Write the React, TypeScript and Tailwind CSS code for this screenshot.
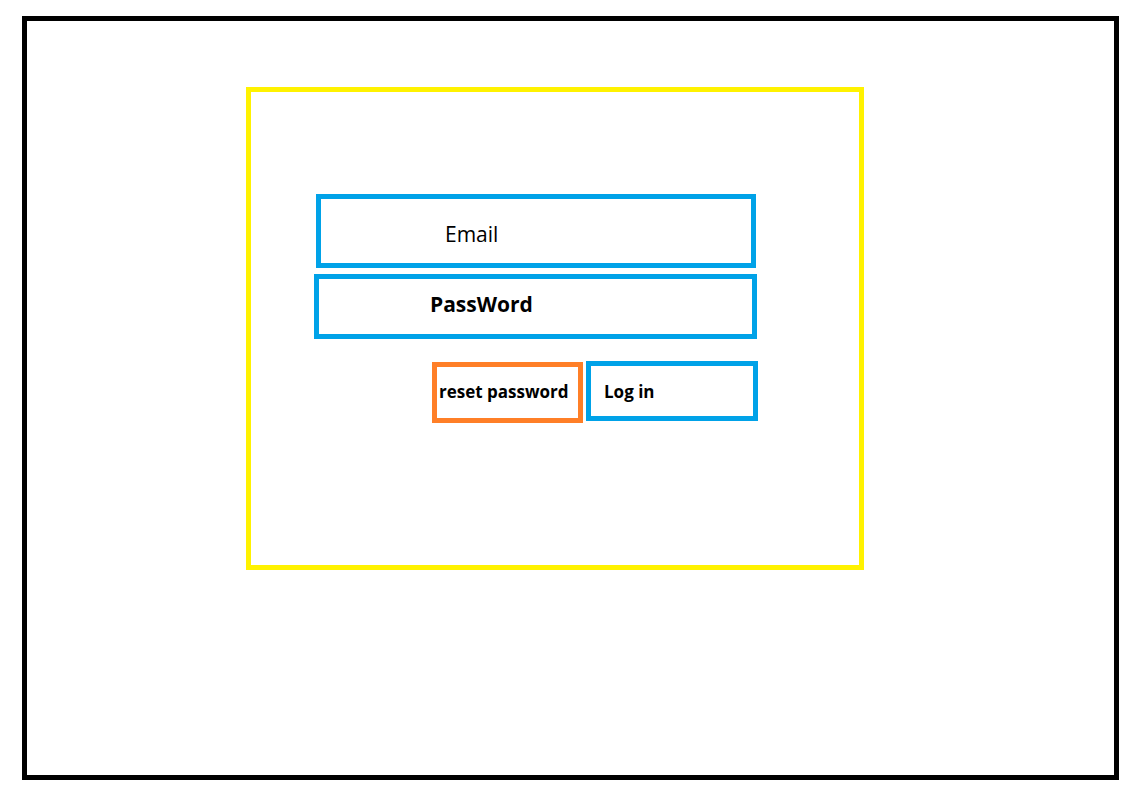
export default function App() {
  return (
    <div
      className="min-h-screen bg-white pl-[22px] pt-[16px] text-black"
      style={{ fontFamily: '"Open Sans", "Noto Sans", sans-serif' }}
    >
      <div className="w-[1097px] h-[764px] border-[5px] border-black pl-[219px] pt-[66px]">
        <div className="w-[618px] h-[483px] border-[5px] border-[#fff200] pt-[102px]">
          <div className="ml-[65px] w-[440px] h-[74px] border-[5px] border-[#00a2e8] pl-[124px] pt-[25px] text-[21px] leading-none">
            Email
          </div>
          <div className="ml-[63px] mt-[6px] w-[443px] h-[65px] border-[5px] border-[#00a2e8] pl-[111px] pt-[15px] text-[21px] font-bold leading-none">
            PassWord
          </div>
          <div className="ml-[181px] mt-[22px] flex items-start gap-[3px]">
            <div className="mt-[1px] w-[151px] h-[61px] border-[5px] border-[#ff7f27] pl-[2px] pt-[16px] text-[17px] font-bold leading-none whitespace-nowrap cursor-pointer">
              reset password
            </div>
            <div className="w-[172px] h-[60px] border-[5px] border-[#00a2e8] pl-[13px] pt-[17px] text-[17px] font-bold leading-none cursor-pointer">
              Log in
            </div>
          </div>
        </div>
      </div>
    </div>
  );
}
